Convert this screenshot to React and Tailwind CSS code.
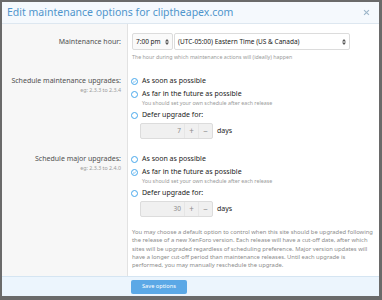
import React from 'react';

const font = { fontFamily: '"Noto Sans", "Open Sans", sans-serif' };

const UpDown = () => (
  <svg width="4" height="6" viewBox="0 0 4 6" className="shrink-0">
    <path d="M2 0L4 2.4H0z M2 6L0 3.6H4z" fill="#555" />
  </svg>
);

const Radio = ({ checked }) => (
  <span className="w-[7px] h-[7px] rounded-full border border-[#47a7eb] bg-white flex items-center justify-center shrink-0">
    {checked && (
      <svg width="5" height="5" viewBox="0 0 10 10">
        <path d="M2.2 5.2L4.2 7.1L7.9 3" fill="none" stroke="#47a7eb" strokeWidth="1.4" />
      </svg>
    )}
  </span>
);

const Choice = ({ checked, label, hint }) => (
  <div className="flex items-start gap-[4px]">
    <div className="h-[10px] flex items-center">
      <Radio checked={checked} />
    </div>
    <div className="flex flex-col">
      <span className="text-[7px] leading-[10px] text-[#222]">{label}</span>
      {hint && <span className="text-[5.3px] leading-[8px] text-[#9a9a9a]">{hint}</span>}
    </div>
  </div>
);

const DeferInput = ({ value }) => (
  <div className="flex items-center gap-[4px] ml-[9px]">
    <div className="w-[73px] h-[16px] flex items-stretch bg-[#f0f0f0] border border-[#dcdcdc] rounded-[2px] text-[#8a8a8a]">
      <div className="flex-1 flex items-center justify-end pr-[3px] text-[6.5px]">{value}</div>
      <div className="w-[14px] flex items-center justify-center text-[8px] border-l border-[#e6e6e6]">+</div>
      <div className="w-[14px] flex items-center justify-center text-[8px] border-l border-[#e6e6e6]">−</div>
    </div>
    <span className="text-[7px] text-[#222]">days</span>
  </div>
);

const Group = ({ label, eg, choices, value }) => (
  <div className="flex">
    <div className="w-[125px] shrink-0 pr-[6px] flex flex-col items-end">
      <span className="text-[7px] leading-[10px] text-[#505050]">{label}</span>
      <span className="text-[5.3px] leading-[8px] text-[#9a9a9a]">{eg}</span>
    </div>
    <div className="flex-1 bg-white pl-[3px] border-l border-[#e2e2e2] flex flex-col gap-[3px] pb-[8px]">
      {choices.map((c, i) => (
        <Choice key={i} {...c} />
      ))}
      <DeferInput value={value} />
    </div>
  </div>
);

export default function App() {
  return (
    <div className="w-[382px] h-[300px] bg-[#6a6a6a] pl-[2px] pr-[3px] pt-[2px] pb-[4px]" style={font}>
      <div className="h-full bg-white flex flex-col overflow-hidden">
        <div className="h-[22px] shrink-0 bg-[#f5f9fd] border-b border-[#dde7f0] flex items-center justify-between pl-[5px] pr-[9px]">
          <span className="text-[10.5px] text-[#4f95cc]">Edit maintenance options for cliptheapex.com</span>
          <svg width="7" height="7" viewBox="0 0 10 10">
            <path d="M1.5 1.5L8.5 8.5M8.5 1.5L1.5 8.5" stroke="#9db6c9" strokeWidth="1.6" />
          </svg>
        </div>

        <div className="flex-1 flex flex-col bg-[#f7f7f7]">
          <div className="flex">
            <div className="w-[125px] shrink-0 pr-[6px] pt-[9px] flex justify-end">
              <span className="text-[7px] leading-[17px] text-[#505050]">Maintenance hour:</span>
            </div>
            <div className="flex-1 bg-white pl-[4px] pt-[9px] pb-[15px] border-l border-[#e2e2e2]">
              <div className="flex gap-[1px] w-[218px]">
                <div className="w-[41px] h-[17px] bg-[#fafafa] border border-[#dcdcdc] rounded-[2px] flex items-center justify-between px-[3px]">
                  <span className="text-[6.5px] text-[#222]">7:00 pm</span>
                  <UpDown />
                </div>
                <div className="flex-1 h-[17px] bg-white border border-[#dcdcdc] rounded-[2px] flex items-center justify-between px-[3px]">
                  <span className="text-[6.5px] text-[#222]">(UTC-05:00) Eastern Time (US &amp; Canada)</span>
                  <UpDown />
                </div>
              </div>
              <div className="text-[5.3px] leading-[8px] text-[#9a9a9a] mt-[3px]">
                The hour during which maintenance actions will (ideally) happen
              </div>
            </div>
          </div>

          <div className="flex-1 flex flex-col">
            <Group
              label="Schedule maintenance upgrades:"
              eg="eg: 2.3.3 to 2.3.4"
              value="7"
              choices={[
                { checked: true, label: 'As soon as possible' },
                { label: 'As far in the future as possible', hint: 'You should set your own schedule after each release' },
                { label: 'Defer upgrade for:' },
              ]}
            />
            <div className="flex">
              <div className="w-[125px] shrink-0" />
              <div className="flex-1 h-[7px] bg-white border-l border-[#e2e2e2]" />
            </div>
            <Group
              label="Schedule major upgrades:"
              eg="eg: 2.3.3 to 2.4.0"
              value="30"
              choices={[
                { label: 'As soon as possible' },
                { checked: true, label: 'As far in the future as possible', hint: 'You should set your own schedule after each release' },
                { label: 'Defer upgrade for:' },
              ]}
            />
            <div className="flex flex-1">
              <div className="w-[125px] shrink-0" />
              <div className="flex-1 bg-white border-l border-[#e2e2e2] pl-[4px] pr-[6px] pt-[3px]">
                <p className="text-[5.85px] leading-[8.3px] text-[#8c8c8c]">
                  You may choose a default option to control when this site should be upgraded following the release of a new XenForo version. Each release will have a cut-off date, after which sites will be upgraded regardless of scheduling preference. Major version updates will have a longer cut-off period than maintenance releases. Until each upgrade is performed, you may manually reschedule the upgrade.
                </p>
              </div>
            </div>
          </div>
        </div>

        <div className="h-[20px] shrink-0 bg-[#ecf5fd] border-t border-[#d5e5f2] flex items-center pl-[129px]">
          <div className="w-[56px] h-[14px] bg-[#5ba8e6] rounded-[2px] flex items-center justify-center">
            <span className="text-[5.7px] text-white">Save options</span>
          </div>
        </div>
      </div>
    </div>
  );
}
